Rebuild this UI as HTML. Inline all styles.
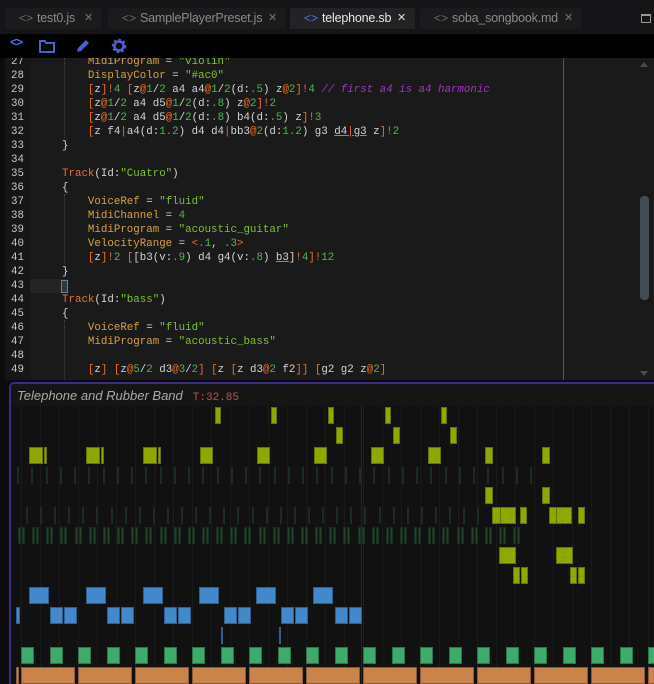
<!DOCTYPE html>
<html style="overflow:hidden;width:654px;height:684px"><head><meta charset="utf-8"><style>
*{margin:0;padding:0;box-sizing:border-box}
html,body{overflow:hidden}
body{width:654px;height:684px;background:#0c0c0c;position:relative;font-family:"Liberation Sans",sans-serif}
.tabbar{position:absolute;left:0;top:0;width:654px;height:34px;background:#151517}
.tab{position:absolute;top:8px;height:21px;background:#1b1b1d;color:#8a8a8a;font-size:12.5px;line-height:21px;padding-left:14px;border-radius:3px 3px 0 0;letter-spacing:-0.2px}
.tab .ic{color:#666;margin-right:4px;letter-spacing:0px;font-size:12px}
.tab .x{position:absolute;right:9px;top:0;color:#777;font-size:11px}
.tab.act{background:#232326;color:#e8e8e8}
.tab.act .ic{color:#4a74f0}
.tab.act .x{color:#ddd}
.tool{position:absolute;left:0;top:34px;width:654px;height:24px;background:#000}
.editor{position:absolute;left:5px;top:58px;width:649px;height:322px;background:#1a1a1a;overflow:hidden}
.gut{position:absolute;left:0;top:0;width:26px;height:322px;background:#161616}
.code{position:absolute;left:0;top:-3px;font-family:"Liberation Mono",monospace;font-size:10.8px;line-height:14px;white-space:pre;color:#d4d4d4}
.code div{height:14px}
.ln{display:inline-block;width:19px;text-align:right;color:#c8c8c8;margin-right:38px}
.p{color:#d9a23a}.s{color:#7cc52a}.k{color:#e8702a}.o{color:#e8702a}.n{color:#4fb84f}.c{color:#a035c0;font-style:italic}
.u{text-decoration:underline;text-decoration-color:#3bc060}
.panel{position:absolute;left:9px;top:382px;width:645px;height:302px;background:#111;border-top:2px solid #3a2c88;border-left:2px solid #3a2c88;border-radius:5px 0 0 0;overflow:hidden}
.title{position:absolute;left:0;top:0;width:100%;height:22px;background:#151515;color:#aaa;font-style:italic;font-size:13px;line-height:24px;padding-left:6px}
.title span{font-style:normal;font-family:"Liberation Mono",monospace;font-size:11px;color:#c05050;margin-left:10px}
.nt{position:absolute;height:17px}
#notes{position:absolute;left:0;top:0;width:654px;height:684px;overflow:hidden}
</style></head><body>
<div class="tabbar">
<div class="tab" style="left:5px;width:97px"><span class="ic">&lt;&gt;</span>test0.js<span class="x">✕</span></div>
<div class="tab" style="left:108px;width:178px"><span class="ic">&lt;&gt;</span>SamplePlayerPreset.js<span class="x">✕</span></div>
<div class="tab act" style="left:290px;width:125px"><span class="ic">&lt;&gt;</span>telephone.sb<span class="x">✕</span></div>
<div class="tab" style="left:420px;width:162px"><span class="ic">&lt;&gt;</span>soba_songbook.md<span class="x">✕</span></div>
<div style="position:absolute;left:641px;top:14px;width:10px;height:9px;border:1px solid #999;border-top-width:2px"></div>
</div>
<div class="tool">
<div style="position:absolute;left:10px;top:1px;color:#4a74f0;font-size:12px;font-weight:bold;letter-spacing:-1px">&lt;&gt;</div>
<svg style="position:absolute;left:39px;top:6px" width="16" height="13"><path d="M1 1h5l1 2h8v9H1z" fill="none" stroke="#4a62d0" stroke-width="2"/></svg>
<svg style="position:absolute;left:75px;top:4px" width="16" height="16"><path d="M2 14l1-4 8-8 3 3-8 8z" fill="#4a62d0"/></svg>
<svg style="position:absolute;left:111px;top:4px" width="16" height="16"><circle cx="8" cy="8" r="5.5" fill="none" stroke="#4a62d0" stroke-width="3.5" stroke-dasharray="2.2 2"/><circle cx="8" cy="8" r="4.5" fill="none" stroke="#4a62d0" stroke-width="2.5"/></svg>
</div>
<div class="editor">
<div class="gut"></div>
<div style="position:absolute;left:25px;top:221px;width:38px;height:14px;background:#242424"></div>
<div style="position:absolute;left:59px;top:0;height:80px;border-left:1px dotted #444"></div>
<div style="position:absolute;left:59px;top:136px;height:70px;border-left:1px dotted #444"></div>
<div style="position:absolute;left:59px;top:262px;height:60px;border-left:1px dotted #444"></div>
<div style="position:absolute;left:558px;top:0;width:1px;height:322px;background:#555"></div>
<div style="position:absolute;left:635px;top:138px;width:9px;height:104px;border-radius:4px;background:#434c52"></div>
<div style="position:absolute;left:635px;top:4px;border-left:4.5px solid transparent;border-right:4.5px solid transparent;border-bottom:5px solid #434c52"></div>
<div style="position:absolute;left:635px;top:313px;border-left:4.5px solid transparent;border-right:4.5px solid transparent;border-top:5px solid #434c52"></div>
<div style="position:absolute;left:56px;top:222px;width:7px;height:13px;border:1px solid #6a8090;background:#2c3a44"></div>
<div class="code"><div><span class="ln">27</span>    <span class="p">MidiProgram</span> = <span class="s">"violin"</span></div><div><span class="ln">28</span>    <span class="p">DisplayColor</span> = <span class="s">"#ac0"</span></div><div><span class="ln">29</span>    <span class="o">[</span>z<span class="o">]!</span><span class="n">4</span> <span class="o">[</span>z<span class="o">@</span><span class="n">1</span>/<span class="n">2</span> a4 a4<span class="o">@</span><span class="n">1</span>/<span class="n">2</span>(d:<span class="n">.5</span>) z<span class="o">@</span><span class="n">2</span><span class="o">]!</span><span class="n">4</span> <span class="c">// first a4 is a4 harmonic</span></div><div><span class="ln">30</span>    <span class="o">[</span>z<span class="o">@</span><span class="n">1</span>/<span class="n">2</span> a4 d5<span class="o">@</span><span class="n">1</span>/<span class="n">2</span>(d:<span class="n">.8</span>) z<span class="o">@</span><span class="n">2</span><span class="o">]!</span><span class="n">2</span></div><div><span class="ln">31</span>    <span class="o">[</span>z<span class="o">@</span><span class="n">1</span>/<span class="n">2</span> a4 d5<span class="o">@</span><span class="n">1</span>/<span class="n">2</span>(d:<span class="n">.8</span>) b4(d:<span class="n">.5</span>) z<span class="o">]!</span><span class="n">3</span></div><div><span class="ln">32</span>    <span class="o">[</span>z f4<span class="o">|</span>a4(d:<span class="n">1.2</span>) d4 d4<span class="o">|</span>bb3<span class="o">@</span><span class="n">2</span>(d:<span class="n">1.2</span>) g3 <span class="u">d4<span class="o">|</span>g3</span> z<span class="o">]!</span><span class="n">2</span></div><div><span class="ln">33</span>}</div><div><span class="ln">34</span></div><div><span class="ln">35</span><span class="k">Track</span>(Id:<span class="s">"Cuatro"</span>)</div><div><span class="ln">36</span>{</div><div><span class="ln">37</span>    <span class="p">VoiceRef</span> = <span class="s">"fluid"</span></div><div><span class="ln">38</span>    <span class="p">MidiChannel</span> = <span class="n">4</span></div><div><span class="ln">39</span>    <span class="p">MidiProgram</span> = <span class="s">"acoustic_guitar"</span></div><div><span class="ln">40</span>    <span class="p">VelocityRange</span> = <span class="o">&lt;</span><span class="n">.1</span>, <span class="n">.3</span><span class="o">&gt;</span></div><div><span class="ln">41</span>    <span class="o">[</span>z<span class="o">]!</span><span class="n">2</span> <span class="o">[</span>[b3(v:<span class="n">.9</span>) d4 g4(v:<span class="n">.8</span>) <span class="u">b3</span>]<span class="o">!</span><span class="n">4</span><span class="o">]!</span><span class="n">12</span></div><div><span class="ln">42</span>}</div><div><span class="ln">43</span></div><div><span class="ln">44</span><span class="k">Track</span>(Id:<span class="s">"bass"</span>)</div><div><span class="ln">45</span>{</div><div><span class="ln">46</span>    <span class="p">VoiceRef</span> = <span class="s">"fluid"</span></div><div><span class="ln">47</span>    <span class="p">MidiProgram</span> = <span class="s">"acoustic_bass"</span></div><div><span class="ln">48</span></div><div><span class="ln">49</span>    <span class="o">[</span>z<span class="o">]</span> <span class="o">[</span>z<span class="o">@</span><span class="n">5</span>/<span class="n">2</span> d3<span class="o">@</span><span class="n">3</span>/<span class="n">2</span><span class="o">]</span> <span class="o">[</span>z <span class="o">[</span>z d3<span class="o">@</span><span class="n">2</span> f2<span class="o">]]</span> <span class="o">[</span>g2 g2 z<span class="o">@</span><span class="n">2</span><span class="o">]</span></div></div>
</div>
<div class="panel"><div class="title">Telephone and Rubber Band<span>T:32.85</span></div></div>
<div id="notes"></div>
<script>
var h='';
function n(x,w,row,c){h+='<div class="nt" style="left:'+x+'px;width:'+w+'px;top:'+(407+row*20)+'px;background:'+c+';box-shadow:inset 0 0 0 1px rgba(0,0,0,.3)"></div>';}
for(var x=21;x<654;x+=19)h+='<div style="position:absolute;left:'+x+'px;top:405px;width:1px;height:279px;background:#1b1b1b"></div>';
h+='<div style="position:absolute;left:361px;top:405px;width:1px;height:279px;background:#1e2a1e"></div>';
var O='#8ea800',B='#4488cc',G='#23432c',GR='#3faa6a',OR='#c8844a';
[215,271,328,385,441].forEach(function(x){n(x,6,0,O)});
[336,393,450].forEach(function(x){n(x,7,1,O)});
[29,86,143].forEach(function(x){n(x,14,2,O);n(x+15,3,2,O)});
[200,257,314,371,428].forEach(function(x){n(x,13,2,O)});
[485,542].forEach(function(x){n(x,8,2,O);n(x,8,4,O)});
for(var x=17;x<=530;x+=14.25)n(Math.round(x),2,3,G);
for(var x=26;x<=485;x+=14.1)n(Math.round(x),2,5,G);
n(492,11,5,O);n(500,16,5,O);n(520,7,5,O);n(549,11,5,O);n(556,16,5,O);n(578,7,5,O);
for(var x=18;x<=520;x+=14.15){n(Math.round(x),3,6,G);n(Math.round(x)+4,3,6,G);}
n(499,17,7,O);n(556,17,7,O);
n(513,7,8,O);n(521,7,8,O);n(570,7,8,O);n(578,7,8,O);
[29,86,143,199,256,313].forEach(function(x){n(x,20,9,B)});
n(16,4,10,B);
[50,107,164,224,281,335].forEach(function(x){n(x,13,10,B);n(x+14,13,10,B)});
n(221,2,11,B);n(279,2,11,B);
for(var x=21;x<654;x+=28.5)n(Math.round(x),13,12,GR);
n(16,3,13,OR);
for(var x=21;x<654;x+=57)n(Math.round(x),54,13,OR);
document.getElementById('notes').innerHTML=h;
</script>
</body></html>
